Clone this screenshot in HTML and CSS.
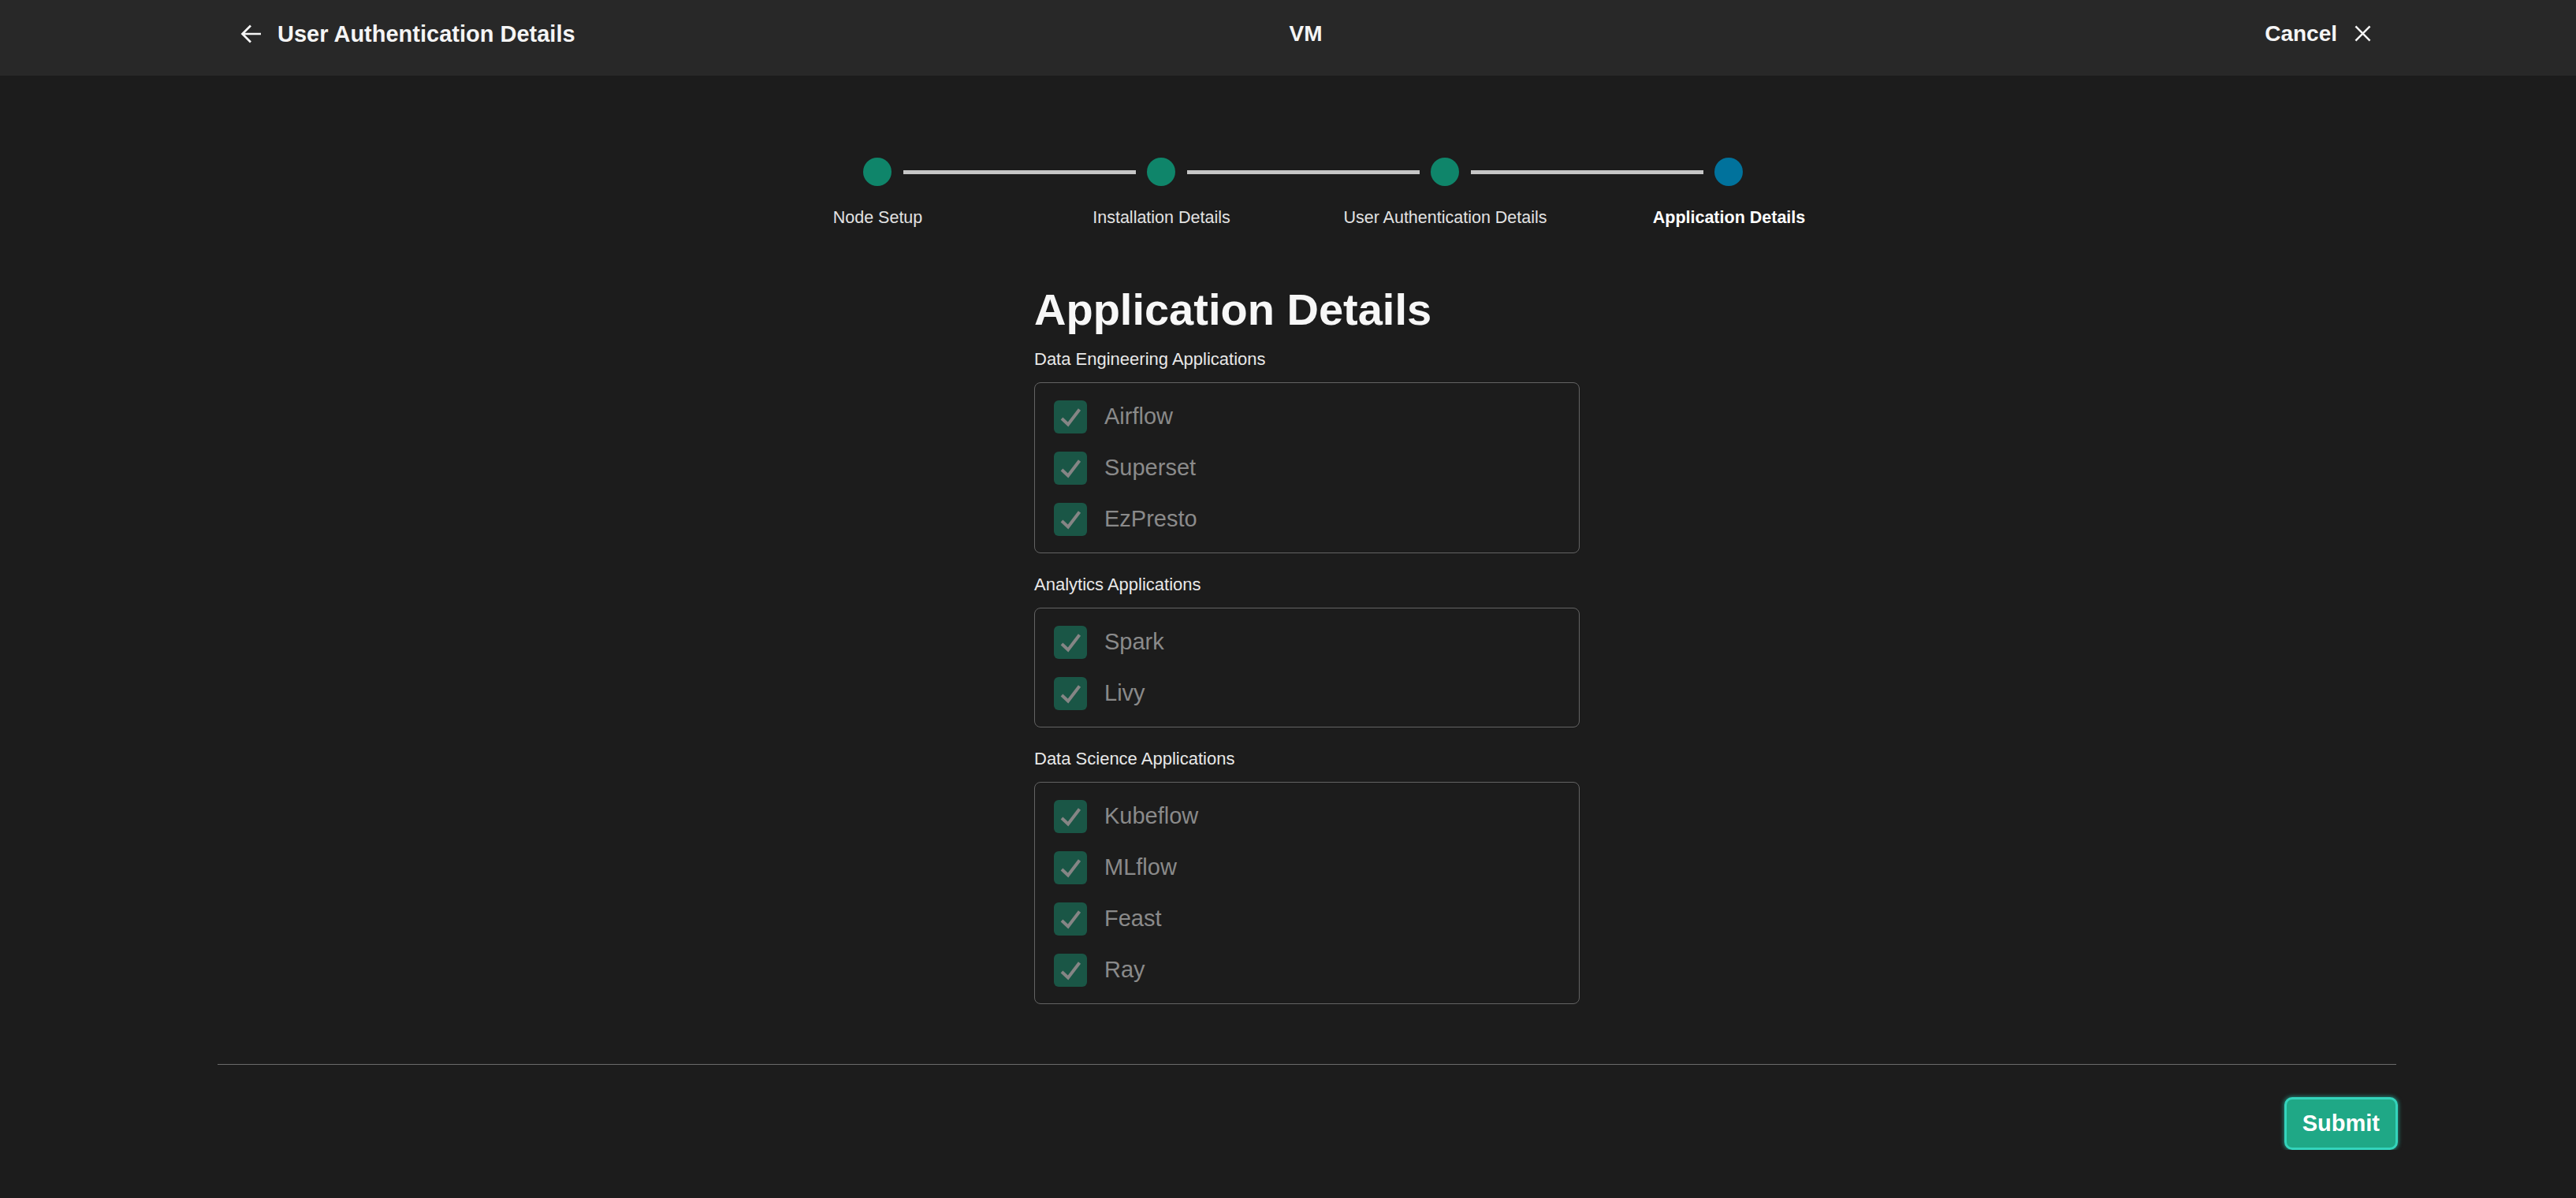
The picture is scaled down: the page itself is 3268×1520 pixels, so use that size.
FILE: index.html
```html
<!DOCTYPE html>
<html lang="en">
<head>
<meta charset="utf-8">
<title>Application Details</title>
<link rel="stylesheet" href="styles.css">
</head>
<body>
<header class="topbar">
  <div class="nav-left">
    <svg class="icon-back" width="27" height="24" viewBox="0 0 27 24" aria-hidden="true">
      <path d="M26 12H3M13 1.5L2.5 12L13 22.5" fill="none" stroke="#f5f5f5" stroke-width="2.7" stroke-linecap="butt" stroke-linejoin="miter"/>
    </svg>
    <span class="nav-title">User Authentication Details</span>
  </div>
  <div class="nav-center">VM</div>
  <div class="nav-right">
    <span class="nav-cancel">Cancel</span>
    <svg class="icon-close" width="22" height="22" viewBox="0 0 22 22" aria-hidden="true">
      <path d="M1.5 1.5L20.5 20.5M20.5 1.5L1.5 20.5" fill="none" stroke="#f5f5f5" stroke-width="2.6"/>
    </svg>
  </div>
</header>

<main class="page">
  <ol class="stepper">
    <li class="step done first">
      <div class="step-track"><span class="dot"></span></div>
      <span class="step-label">Node Setup</span>
    </li>
    <li class="step done">
      <div class="step-track"><span class="dot"></span></div>
      <span class="step-label">Installation Details</span>
    </li>
    <li class="step done">
      <div class="step-track"><span class="dot"></span></div>
      <span class="step-label">User Authentication Details</span>
    </li>
    <li class="step current last">
      <div class="step-track"><span class="dot"></span></div>
      <span class="step-label">Application Details</span>
    </li>
  </ol>

  <section class="form">
    <h1 class="form-title">Application Details</h1>

    <div class="group">
      <div class="group-label">Data Engineering Applications</div>
      <div class="group-box">
        <div class="check"><span class="box"><svg viewBox="0 0 42 42" width="42" height="42"><path d="M10 23L18 30.5L32.5 11.5" /></svg></span><span class="check-text">Airflow</span></div>
        <div class="check"><span class="box"><svg viewBox="0 0 42 42" width="42" height="42"><path d="M10 23L18 30.5L32.5 11.5" /></svg></span><span class="check-text">Superset</span></div>
        <div class="check"><span class="box"><svg viewBox="0 0 42 42" width="42" height="42"><path d="M10 23L18 30.5L32.5 11.5" /></svg></span><span class="check-text">EzPresto</span></div>
      </div>
    </div>

    <div class="group">
      <div class="group-label">Analytics Applications</div>
      <div class="group-box">
        <div class="check"><span class="box"><svg viewBox="0 0 42 42" width="42" height="42"><path d="M10 23L18 30.5L32.5 11.5" /></svg></span><span class="check-text">Spark</span></div>
        <div class="check"><span class="box"><svg viewBox="0 0 42 42" width="42" height="42"><path d="M10 23L18 30.5L32.5 11.5" /></svg></span><span class="check-text">Livy</span></div>
      </div>
    </div>

    <div class="group">
      <div class="group-label">Data Science Applications</div>
      <div class="group-box">
        <div class="check"><span class="box"><svg viewBox="0 0 42 42" width="42" height="42"><path d="M10 23L18 30.5L32.5 11.5" /></svg></span><span class="check-text">Kubeflow</span></div>
        <div class="check"><span class="box"><svg viewBox="0 0 42 42" width="42" height="42"><path d="M10 23L18 30.5L32.5 11.5" /></svg></span><span class="check-text">MLflow</span></div>
        <div class="check"><span class="box"><svg viewBox="0 0 42 42" width="42" height="42"><path d="M10 23L18 30.5L32.5 11.5" /></svg></span><span class="check-text">Feast</span></div>
        <div class="check"><span class="box"><svg viewBox="0 0 42 42" width="42" height="42"><path d="M10 23L18 30.5L32.5 11.5" /></svg></span><span class="check-text">Ray</span></div>
      </div>
    </div>
  </section>

  <footer class="actions">
    <button class="btn-submit" type="button">Submit</button>
  </footer>
</main>
</body>
</html>
```

FILE: styles.css
```css
* { box-sizing: border-box; }

html, body {
  margin: 0;
  padding: 0;
  background: #1c1c1c;
  color: #f5f5f5;
  font-family: "Liberation Sans", Arial, sans-serif;
}

/* ---------- top bar ---------- */
.topbar {
  height: 96px;
  background: #282828;
  display: grid;
  grid-template-columns: 1fr auto 1fr;
  align-items: center;
  padding: 0 260px 11px 305px;
}

.nav-left {
  display: flex;
  align-items: center;
  gap: 20px;
}
.icon-back { display: block; margin-top: 1px; }
.nav-title {
  font-size: 29px;
  font-weight: 700;
  line-height: 34px;
  color: #f5f5f5;
}

.nav-center {
  font-size: 28px;
  font-weight: 700;
  line-height: 34px;
  color: #f5f5f5;
}

.nav-right {
  display: flex;
  align-items: center;
  justify-content: flex-end;
  gap: 22px;
}
.nav-cancel {
  font-size: 28px;
  font-weight: 700;
  line-height: 34px;
  color: #f5f5f5;
}
.icon-close { display: block; width: 21px; height: 21px; }

/* ---------- page ---------- */
.page {
  margin: 0 228px 0 276px;
}

/* ---------- stepper ---------- */
.stepper {
  list-style: none;
  margin: 0;
  padding: 104px 9px 0 0;
  display: flex;
  justify-content: center;
}

.step {
  width: 360px;
  display: flex;
  flex-direction: column;
  align-items: center;
}

.step-track {
  width: 100%;
  height: 36px;
  display: flex;
  align-items: center;
}
.step-track::before,
.step-track::after {
  content: "";
  flex: 1;
  height: 5px;
  background: #c6c6c6;
}
.step-track::before { margin-right: 14px; }
.step-track::after { margin-left: 15px; }
.step.first .step-track::before,
.step.last .step-track::after { background: transparent; }

.dot {
  width: 36px;
  height: 36px;
  border-radius: 50%;
  background: #0f856a;
  flex: none;
}
.step.current .dot { background: #01729c; }

.step-label {
  margin-top: 27px;
  font-size: 21.5px;
  line-height: 26px;
  color: #e2e2e2;
  white-space: nowrap;
}
.step.current .step-label {
  font-weight: 700;
  color: #ffffff;
}

/* ---------- form ---------- */
.form {
  width: 692px;
  margin: 0 auto;
}

.form-title {
  margin: 72px 0 18px;
  font-size: 56px;
  line-height: 64px;
  font-weight: 700;
  color: #f7f7f7;
}

.group + .group { margin-top: 27px; }

.group-label {
  font-size: 22px;
  line-height: 26px;
  color: #e8e8e8;
  margin-bottom: 16px;
}

.group-box {
  border: 1px solid #636363;
  border-radius: 8px;
  padding: 21px 24px;
  display: flex;
  flex-direction: column;
  gap: 22px;
}

.check {
  display: flex;
  align-items: center;
  gap: 22px;
  height: 43px;
}

.box {
  width: 42px;
  height: 42px;
  border-radius: 6px;
  background: #1a5646;
  flex: none;
  display: block;
}
.box svg { display: block; }
.box path {
  fill: none;
  stroke: #858585;
  stroke-width: 4;
  stroke-linecap: butt;
  stroke-linejoin: miter;
}

.check-text {
  font-size: 29px;
  line-height: 43px;
  color: #8a8a8a;
}

/* ---------- footer actions ---------- */
.actions {
  margin-top: 76px;
  border-top: 1px solid #6a6a6a;
  padding-top: 41px;
  display: flex;
  justify-content: flex-end;
}

.btn-submit {
  height: 67px;
  margin-right: -2px;
  padding: 0 20px;
  border: 3px solid #34d4bc;
  border-radius: 10px;
  background: #1fa886;
  color: #ffffff;
  font-family: "Liberation Sans", Arial, sans-serif;
  font-size: 29px;
  font-weight: 700;
  line-height: 1;
  box-shadow: 0 0 5px 1px rgba(45, 210, 185, 0.55);
  cursor: pointer;
}
```
